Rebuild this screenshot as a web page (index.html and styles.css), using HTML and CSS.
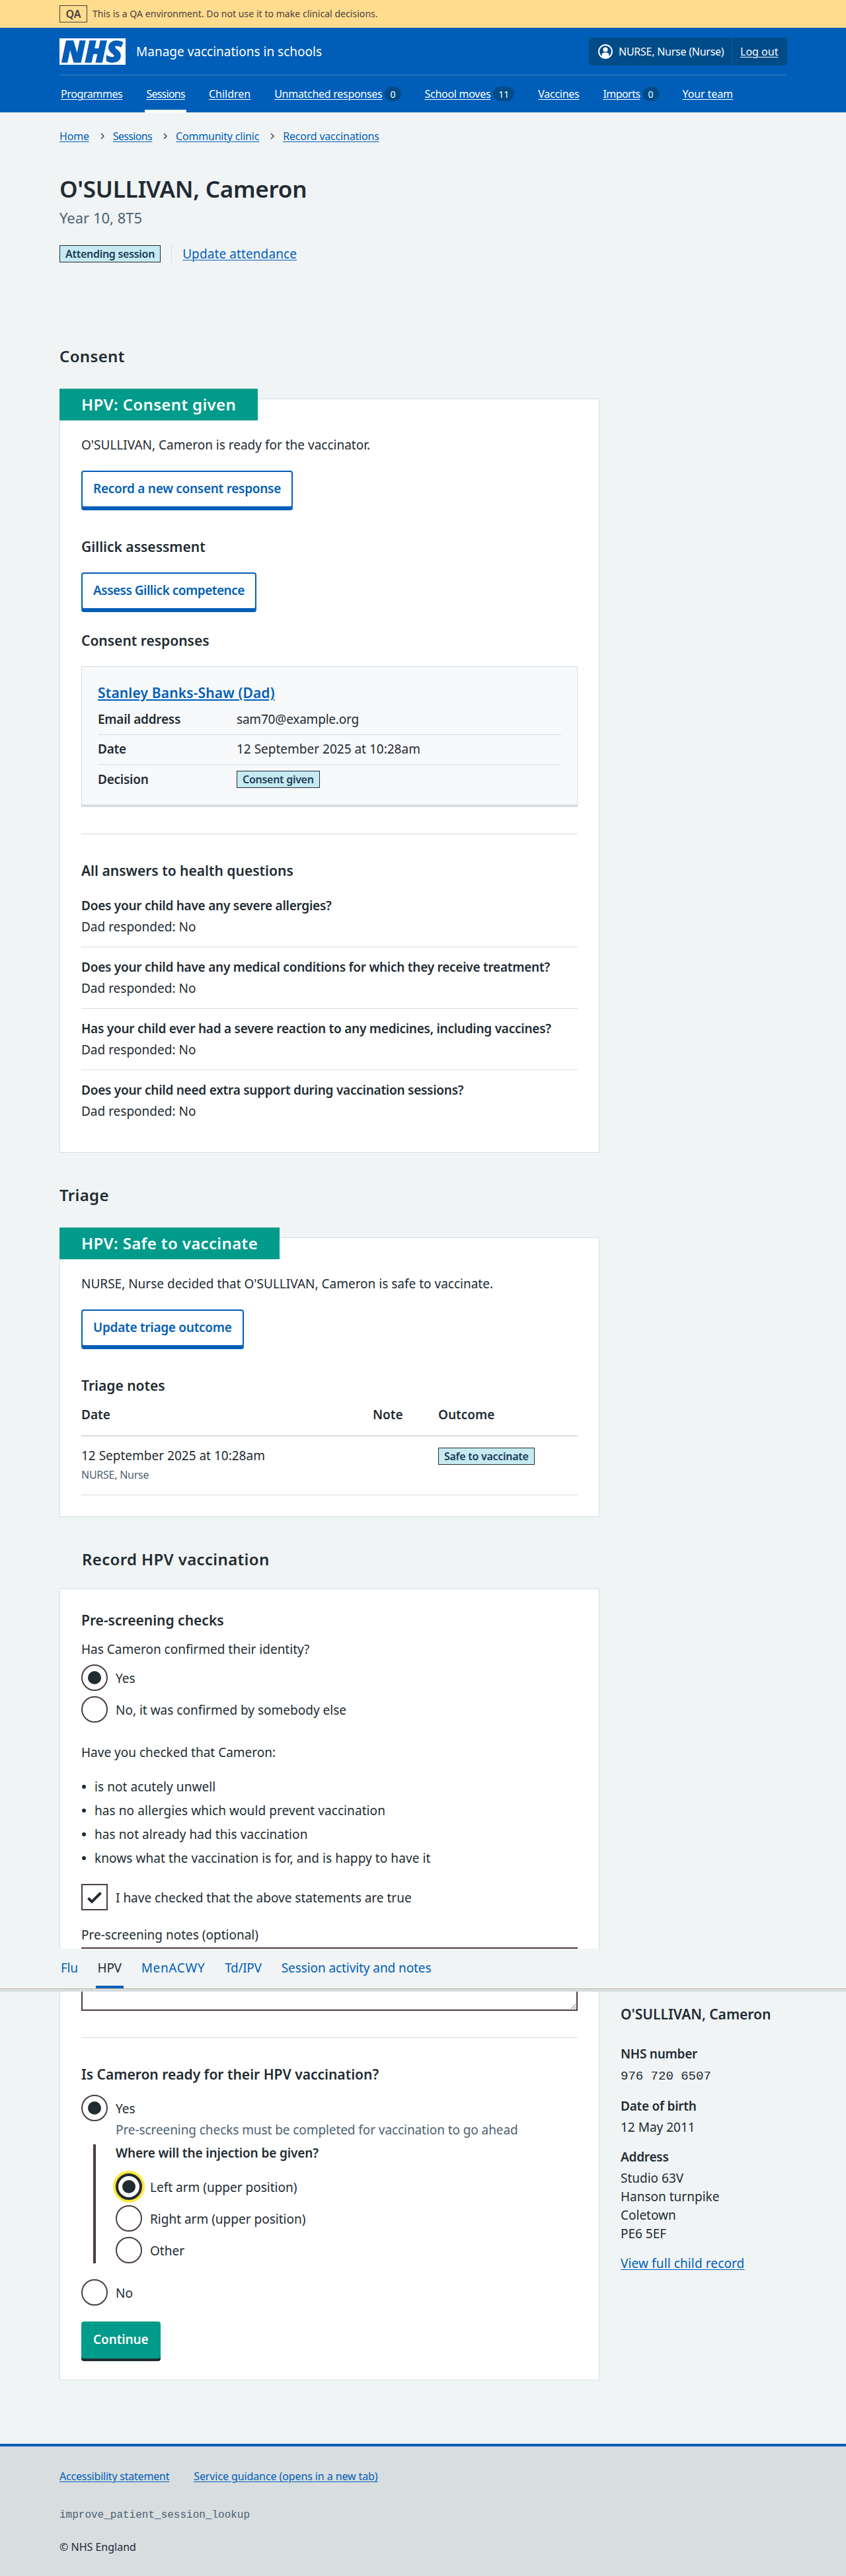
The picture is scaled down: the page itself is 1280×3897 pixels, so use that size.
FILE: index.html
```
<!DOCTYPE html>
<html lang="en">
<head>
<meta charset="utf-8">
<title>O'SULLIVAN, Cameron - Manage vaccinations in schools</title>
<link rel="stylesheet" href="styles.css">
</head>
<body>
<div class="env">
  <div class="container env-inner"><strong class="env-tag">QA</strong><span>This is a QA environment. Do not use it to make clinical decisions.</span></div>
</div>
<header class="header">
  <div class="container">
    <div class="header-top">
      <svg class="logo" width="100" height="40" viewBox="0 0 100 40" role="img" aria-label="NHS"><rect width="100" height="40" fill="#fff"/><text x="3" y="36" textLength="92" lengthAdjust="spacingAndGlyphs">NHS</text></svg>
      <span class="service">Manage vaccinations in schools</span>
      <div class="account">
        <span class="account-name"><svg width="22" height="22" viewBox="0 0 22 22" aria-hidden="true"><circle cx="11" cy="11" r="10" fill="none" stroke="#fff" stroke-width="2"/><circle cx="11" cy="8" r="3.6" fill="#fff"/><path d="M5.6 18.6v-2.2a4 4 0 0 1 4-4h2.8a4 4 0 0 1 4 4v2.2A10 10 0 0 1 5.6 18.6z" fill="#fff"/></svg><span>NURSE, Nurse (Nurse)</span></span>
        <a class="account-out" href="#">Log out</a>
      </div>
    </div>
    <nav class="nav">
      <span class="nav-item"><a href="#">Programmes</a></span>
      <span class="nav-item current"><a href="#">Sessions</a></span>
      <span class="nav-item"><a href="#">Children</a></span>
      <span class="nav-item"><a href="#">Unmatched responses</a><span class="count">0</span></span>
      <span class="nav-item"><a href="#">School moves</a><span class="count">11</span></span>
      <span class="nav-item"><a href="#">Vaccines</a></span>
      <span class="nav-item"><a href="#">Imports</a><span class="count">0</span></span>
      <span class="nav-item"><a href="#">Your team</a></span>
    </nav>
  </div>
</header>
<main class="container main">
  <nav class="crumbs">
    <a href="#">Home</a><svg class="chev" width="6" height="10" viewBox="0 0 6 10"><path d="M1 1l4 4-4 4"/></svg>
    <a class="tight" href="#">Sessions</a><svg class="chev" width="6" height="10" viewBox="0 0 6 10"><path d="M1 1l4 4-4 4"/></svg>
    <a href="#">Community clinic</a><svg class="chev" width="6" height="10" viewBox="0 0 6 10"><path d="M1 1l4 4-4 4"/></svg>
    <a href="#">Record vaccinations</a>
  </nav>
  <h1 class="title">O'SULLIVAN, Cameron</h1>
  <p class="caption">Year 10, 8T5</p>
  <div class="status"><strong class="tag">Attending session</strong><a class="status-link" href="#">Update attendance</a></div>

  <div class="columns">
    <div class="content">
      <h2 class="heading-m">Consent</h2>
      <section class="card">
        <h3 class="banner">HPV: Consent given</h3>
        <p>O'SULLIVAN, Cameron is ready for the vaccinator.</p>
        <a class="button secondary" href="#">Record a new consent response</a>
        <h4 class="heading-s gap-l">Gillick assessment</h4>
        <a class="button secondary condensed" href="#">Assess Gillick competence</a>
        <h4 class="heading-s gap-m">Consent responses</h4>
        <article class="response">
          <h5 class="heading-s"><a href="#">Stanley Banks-Shaw (Dad)</a></h5>
          <dl class="summary">
            <div class="row"><dt>Email address</dt><dd class="email">sam70@example.org</dd></div>
            <div class="row"><dt>Date</dt><dd>12 September 2025 at 10:28am</dd></div>
            <div class="row"><dt>Decision</dt><dd><strong class="tag">Consent given</strong></dd></div>
          </dl>
        </article>
        <hr>
        <h4 class="heading-s after-hr">All answers to health questions</h4>
        <dl class="answers">
          <div><dt>Does your child have any severe allergies?</dt><dd>Dad responded: No</dd></div>
          <div><dt>Does your child have any medical conditions for which they receive treatment?</dt><dd>Dad responded: No</dd></div>
          <div><dt>Has your child ever had a severe reaction to any medicines, including vaccines?</dt><dd>Dad responded: No</dd></div>
          <div><dt>Does your child need extra support during vaccination sessions?</dt><dd>Dad responded: No</dd></div>
        </dl>
      </section>

      <h2 class="heading-m next">Triage</h2>
      <section class="card card-short">
        <h3 class="banner">HPV: Safe to vaccinate</h3>
        <p>NURSE, Nurse decided that O'SULLIVAN, Cameron is safe to vaccinate.</p>
        <a class="button secondary" href="#">Update triage outcome</a>
        <h4 class="heading-s gap-l">Triage notes</h4>
        <div class="notes">
          <div class="notes-row notes-head"><span>Date</span><span>Note</span><span>Outcome</span></div>
          <div class="notes-row"><div><p>12 September 2025 at 10:28am</p><p class="by">NURSE, Nurse</p></div><div></div><div><strong class="tag">Safe to vaccinate</strong></div></div>
        </div>
      </section>

      <h2 class="heading-m record">Record HPV vaccination</h2>
      <form class="card card-form">
        <h3 class="heading-s">Pre-screening checks</h3>
        <p class="question">Has Cameron confirmed their identity?</p>
        <div class="options">
          <label class="option"><i class="radio on"></i><span>Yes</span></label>
          <label class="option"><i class="radio"></i><span>No, it was confirmed by somebody else</span></label>
        </div>
        <p class="check-intro">Have you checked that Cameron:</p>
        <ul class="bullets">
          <li>is not acutely unwell</li>
          <li>has no allergies which would prevent vaccination</li>
          <li>has not already had this vaccination</li>
          <li>knows what the vaccination is for, and is happy to have it</li>
        </ul>
        <label class="option"><i class="checkbox"><svg width="22" height="19" viewBox="0 0 22 19"><path d="M1.500 10.500l5.500 5.500L20.500 2.500"/></svg></i><span>I have checked that the above statements are true</span></label>
        <p class="notes-label">Pre-screening notes (optional)</p>
        <textarea class="textarea" aria-label="Pre-screening notes"></textarea>
        <hr>
        <h3 class="heading-s after-hr">Is Cameron ready for their HPV vaccination?</h3>
        <div class="ready">
          <label class="option"><i class="radio on"></i><span>Yes</span></label>
          <p class="hint">Pre-screening checks must be completed for vaccination to go ahead</p>
          <div class="conditional">
            <p class="legend">Where will the injection be given?</p>
            <div class="options">
              <label class="option"><i class="radio on focus"></i><span>Left arm (upper position)</span></label>
              <label class="option"><i class="radio"></i><span>Right arm (upper position)</span></label>
              <label class="option"><i class="radio"></i><span>Other</span></label>
            </div>
          </div>
          <label class="option"><i class="radio"></i><span>No</span></label>
        </div>
        <button class="button primary" type="button">Continue</button>
      </form>
    </div>
    <aside class="aside">
      <h2 class="heading-s">O'SULLIVAN, Cameron</h2>
      <dl class="person">
        <dt>NHS number</dt><dd class="mono">976 720 6507</dd>
        <dt>Date of birth</dt><dd>12 May 2011</dd>
        <dt>Address</dt><dd>Studio 63V<br>Hanson turnpike<br>Coletown<br>PE6 5EF</dd>
      </dl>
      <a class="record-link" href="#">View full child record</a>
    </aside>
  </div>
</main>
<nav class="tabs">
  <div class="container tabs-inner">
    <a href="#">Flu</a><a class="current" href="#">HPV</a><a class="wide" href="#">MenACWY</a><a href="#">Td/IPV</a><a class="long" href="#">Session activity and notes</a>
  </div>
</nav>
<footer class="footer">
  <div class="container">
    <div class="footer-links"><a href="#">Accessibility statement</a><a href="#">Service guidance (opens in a new tab)</a></div>
    <p class="build">improve_patient_session_lookup</p>
    <p class="copy">© NHS England</p>
  </div>
</footer>
</body>
</html>
```

FILE: styles.css
```
:root {
  --blue: #005eb8;
  --navy: #004b88;
  --text: #212b32;
  --muted: #4c6272;
  --line: #d8dde0;
  --page: #f0f4f5;
  --green: #009b8a;
  --field: #4b3d3f;
}

* { box-sizing: border-box; margin: 0; padding: 0; }

body {
  position: relative;
  background: var(--page);
  color: var(--text);
  font: 400 19px/28px "Noto Sans", "Open Sans", sans-serif;
}

a { color: var(--blue); text-underline-offset: 2px; text-decoration-thickness: 1px; }
i { font-style: normal; }
ul { list-style: none; }
hr { height: 1px; margin-top: 40px; border: 0; background: var(--line); }

.container { width: 1100px; margin: 0 auto; }

/* Environment notice */
.env { height: 42px; background: #ffdc8e; color: var(--field); font-size: 14px; line-height: 24px; letter-spacing: 0.05px; }
.env-inner { display: flex; align-items: center; gap: 8px; height: 42px; }
.env-tag { width: 42px; height: 26px; border: 1px solid currentColor; font-size: 16px; font-weight: 600; text-align: center; }

/* Header */
.header { height: 128px; background: var(--blue); color: #fff; }
.header a { color: #fff; }
.header-top { display: flex; align-items: center; height: 72px; border-bottom: 1px solid #3f82c7; }
.logo { overflow: visible; }
.logo text { fill: var(--blue); stroke: var(--blue); stroke-width: 1.500; font: italic 900 44px "Noto Sans", sans-serif; }
.service { margin-left: 16px; }
.account { display: flex; width: 300px; height: 42px; margin: 0 -1px 0 auto; border-radius: 4px; background: var(--navy); font-size: 16px; line-height: 42px; }
.account-name { display: flex; align-items: center; gap: 9px; width: 217px; padding-left: 14px; border-right: 1px solid var(--blue); letter-spacing: -0.25px; }
.account-out { margin-left: 12px; }
.nav { display: flex; gap: 32px; height: 56px; font-size: 16px; line-height: 24px; letter-spacing: -0.28px; }
.nav-item { display: flex; align-items: center; padding: 4px 2px 0; border-bottom: 4px solid transparent; }
.nav-item:first-child { letter-spacing: -0.4px; }
.nav-item.current { border-bottom-color: #fff; letter-spacing: -0.75px; }
.nav-item:nth-child(3) { letter-spacing: 0; }
.nav-item:nth-child(7) { letter-spacing: -0.55px; }
.nav-item:nth-child(8) { letter-spacing: -0.1px; }
.count { min-width: 24px; height: 22px; margin-left: 4px; padding: 0 8px; border-radius: 12px; background: var(--navy); font-size: 14px; line-height: 23px; letter-spacing: 0; text-align: center; }

/* Page heading */
.main { padding-top: 24px; }
.crumbs { display: flex; align-items: center; height: 24px; font-size: 16px; line-height: 24px; letter-spacing: -0.2px; }
.crumbs .tight { letter-spacing: -0.65px; }
.chev { margin: 0 13px 0 17px; fill: none; stroke: var(--field); stroke-width: 1.500; }
.title { margin-top: 46px; font-size: 35px; line-height: 44px; font-weight: 600; letter-spacing: -0.25px; }
.caption { margin-top: 5px; color: var(--muted); font-size: 22px; line-height: 32px; }
.status { display: flex; align-items: center; height: 26px; margin-top: 26px; }
.status-link { margin-left: 16px; padding-left: 16px; border-left: 1px solid var(--line); line-height: 26px; letter-spacing: 0.1px; }
.tag { display: inline-block; height: 26px; padding: 0 8px; border: 1px solid var(--text); background: #c5eaf2; color: #1c3a55; font-size: 16px; line-height: 25px; font-weight: 600; letter-spacing: -0.28px; }

/* Two-column area */
.columns { display: grid; grid-template-columns: 817px 1fr; column-gap: 32px; margin-top: 126px; }
.heading-m { font-size: 24px; line-height: 32px; font-weight: 600; letter-spacing: 0.35px; }
.heading-m.next { margin-top: 48px; }
.heading-m.record { margin-top: 48px; padding-left: 34px; }
.heading-s { font-size: 21px; line-height: 28px; font-weight: 600; }
.gap-l { margin-top: 45px; }
.gap-m { margin-top: 33px; }
.after-hr { margin-top: 41px; }

.card { margin-top: 48px; padding: 0 32px 48px; border: 1px solid var(--line); background: #fff; }
.card-short { padding-bottom: 32px; }
.card-form { margin-top: 28px; padding: 33px 32px 32px; }
.banner { width: fit-content; height: 48px; margin: -16px 0 23px -33px; padding: 0 33px; background: var(--green); color: #fff; font-size: 24px; line-height: 48px; font-weight: 600; letter-spacing: 0.35px; }

.button { display: block; width: fit-content; height: 56px; border-radius: 4px; font: inherit; font-weight: 600; line-height: 28px; letter-spacing: -0.28px; }
.condensed { letter-spacing: -0.5px; }
.secondary { margin-top: 25px; padding: 11px 16px; border: 2px solid var(--blue); box-shadow: 0 4px 0 var(--blue); text-decoration: none; }
.primary { margin-top: 24px; padding: 0 18px 2px; border: 0; background: var(--green); color: #fff; box-shadow: 0 4px 0 var(--text); letter-spacing: -0.1px; }

/* Consent response */
.response { margin-top: 25px; padding: 25px 24px 24px; border: 1px solid var(--line); border-bottom-width: 4px; background: #f8f9fb; }
.response a { text-decoration-thickness: 2px; letter-spacing: 0.15px; }
.summary { margin-top: 4.600px; }
.row { display: grid; grid-template-columns: 210px 1fr; padding: 7.400px 0 9px; border-bottom: 1px solid var(--line); }
.row:last-child { padding-bottom: 0; border: 0; }
dt, .legend { font-weight: 600; letter-spacing: -0.25px; }
.email { letter-spacing: -0.2px; }
.row .tag { display: block; width: fit-content; margin-top: 1.500px; }

/* Health answers */
.answers { margin-top: 25px; }
.answers div { padding-bottom: 16px; border-bottom: 1px solid var(--line); }
.answers div + div { padding-top: 16px; }
.answers div:last-child { padding-bottom: 0; border: 0; margin-bottom: 0.500px; }
.answers dd { margin-top: 4px; }

/* Triage notes */
.notes { margin-top: 16px; }
.notes-row { display: grid; grid-template-columns: 441px 99px 1fr; padding: 15px 0 18px; border-bottom: 1px solid var(--line); }
.notes-head { padding: 0 0 17px; border-bottom-width: 2px; font-weight: 600; }
.notes-row .tag { display: block; width: fit-content; margin-top: 2px; }
.by { margin-top: 3px; color: var(--muted); font-size: 16px; line-height: 24px; letter-spacing: -0.25px; }

/* Form */
.question { margin-top: 16px; }
.options { display: grid; gap: 8px; margin-top: 9px; }
.option { display: flex; align-items: center; gap: 12px; height: 40px; }
.option span { padding-top: 1px; }
.radio, .checkbox { display: grid; place-items: center; flex: none; width: 40px; height: 40px; border: 2px solid var(--field); background: #fff; }
.radio { border-radius: 50%; }
.radio.on::after { content: ""; width: 20px; height: 20px; border-radius: 50%; background: var(--text); }
.radio.focus { border: 4px solid var(--text); box-shadow: 0 0 0 4px #ffe83b; }
.checkbox path { fill: none; stroke: var(--text); stroke-width: 4; }
.check-intro { margin-top: 31px; }
.bullets { display: grid; gap: 8px; margin: 24px 0 25px; letter-spacing: 0.08px; }
.bullets li { display: flex; align-items: center; gap: 13px; }
.bullets li::before { content: ""; width: 6px; height: 6px; margin-left: 1px; border-radius: 50%; background: var(--text); }
.notes-label { margin-top: 23px; }
.textarea { display: block; width: 100%; height: 96px; margin-top: 5px; border: 2px solid var(--field); background: #fff; }
.ready { margin-top: 17px; }
.hint { margin-top: -1px; padding-left: 52px; color: var(--muted); letter-spacing: -0.08px; }
.conditional { height: 180px; margin: 8px 0 24px 18px; padding-left: 30px; border-left: 4px solid var(--field); }
.legend { line-height: 27px; letter-spacing: -0.12px; }
.conditional .options { margin-top: 17px; }

/* Child details */
.aside { padding-top: 2510px; }
.person { margin-top: 32px; }
.person dd { margin: 4px 0 17px; }
.person .mono { margin: 6px 0 17px; font-family: "Liberation Mono", monospace; }
.record-link { letter-spacing: 0.12px; }

/* Session tabs, pinned over the page */
.tabs { position: absolute; top: 2948px; left: 0; width: 100%; height: 65px; border-bottom: 4px solid var(--line); background: var(--page); }
.tabs-inner { display: flex; gap: 24px; height: 61px; }
.tabs::after { content: ""; display: block; height: 1px; margin-top: -1px; background: #c9b8a8; }
.tabs a { height: 60px; padding: 15px 3px 0; border-bottom: 4px solid transparent; text-decoration: none; letter-spacing: -0.3px; }
.tabs a:first-child { margin-left: -1px; }
.tabs .current { border-bottom-color: var(--blue); color: var(--text); }
.tabs .wide { letter-spacing: 0.65px; }
.tabs .long { letter-spacing: -0.08px; }

/* Footer */
.footer { margin-top: 96px; height: 200px; padding-top: 33px; border-top: 4px solid var(--blue); background: var(--line); font-size: 16px; line-height: 24px; }
.footer-links { display: flex; gap: 37px; letter-spacing: -0.1px; }
.footer-links a:first-child { letter-spacing: -0.22px; }
.build { margin-top: 35px; color: var(--muted); font-family: "Liberation Mono", monospace; }
.copy { margin-top: 24px; }
```
